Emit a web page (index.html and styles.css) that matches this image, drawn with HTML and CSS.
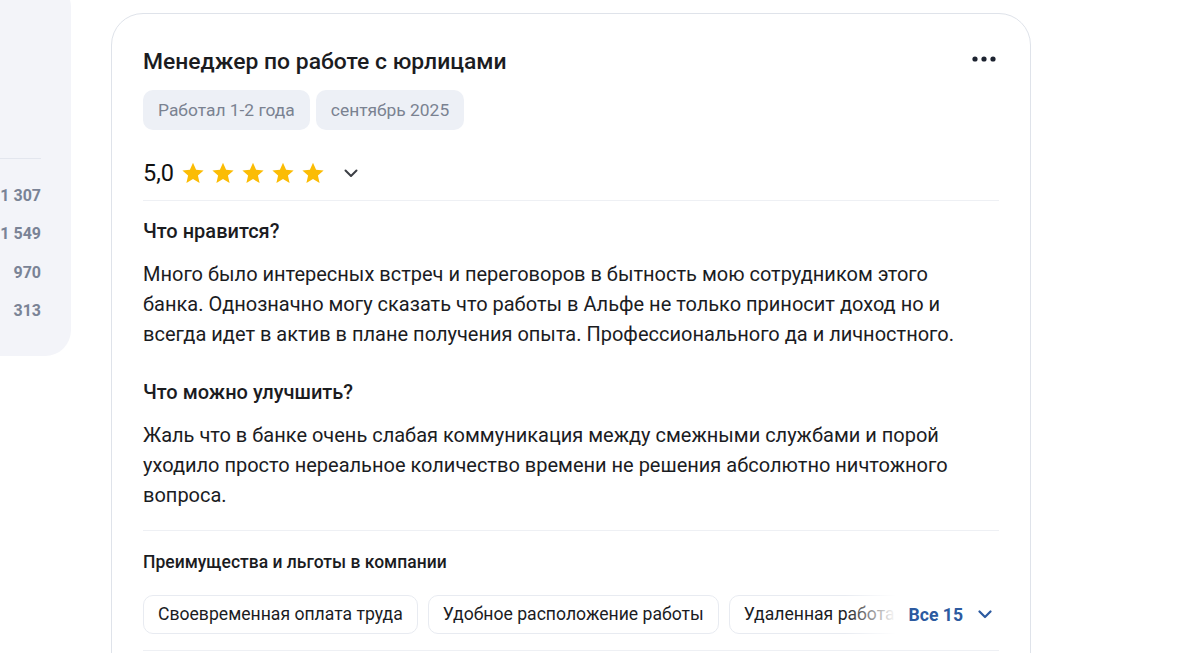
FILE: index.html
```html
<!DOCTYPE html>
<html lang="ru">
<head>
<meta charset="utf-8">
<link rel="stylesheet" href="styles.css">
</head>
<body>
<div class="page">
  <aside class="side">
    <div class="side-top"></div>
    <div class="side-list">
      <div class="side-row">1 307</div>
      <div class="side-row">1 549</div>
      <div class="side-row">970</div>
      <div class="side-row">313</div>
    </div>
  </aside>
  <main class="card">
    <div class="head">
      <h2 class="title">Менеджер по работе с юрлицами</h2>
      <button class="more" aria-label="Ещё"><svg width="24" height="6" viewBox="0 0 24 6"><circle cx="3" cy="3" r="2.6"/><circle cx="12" cy="3" r="2.6"/><circle cx="21" cy="3" r="2.6"/></svg></button>
    </div>
    <div class="tags">
      <span class="tag">Работал 1-2 года</span>
      <span class="tag">сентябрь 2025</span>
    </div>
    <div class="rating">
      <span class="score">5,0</span>
      <span class="stars">
        <svg class="star" viewBox="0 0 24 24"><path d="M12 1.8l3.1 7 7.5.7-5.7 5 1.7 7.5L12 18.1 5.4 22l1.7-7.5-5.7-5 7.5-.7z"/></svg>
        <svg class="star" viewBox="0 0 24 24"><path d="M12 1.8l3.1 7 7.5.7-5.7 5 1.7 7.5L12 18.1 5.4 22l1.7-7.5-5.7-5 7.5-.7z"/></svg>
        <svg class="star" viewBox="0 0 24 24"><path d="M12 1.8l3.1 7 7.5.7-5.7 5 1.7 7.5L12 18.1 5.4 22l1.7-7.5-5.7-5 7.5-.7z"/></svg>
        <svg class="star" viewBox="0 0 24 24"><path d="M12 1.8l3.1 7 7.5.7-5.7 5 1.7 7.5L12 18.1 5.4 22l1.7-7.5-5.7-5 7.5-.7z"/></svg>
        <svg class="star" viewBox="0 0 24 24"><path d="M12 1.8l3.1 7 7.5.7-5.7 5 1.7 7.5L12 18.1 5.4 22l1.7-7.5-5.7-5 7.5-.7z"/></svg>
      </span>
      <svg class="chev" width="14" height="9" viewBox="0 0 14 9"><path d="M1.5 1.5L7 7l5.5-5.5" fill="none" stroke="#3c3f45" stroke-width="2" stroke-linecap="round" stroke-linejoin="round"/></svg>
    </div>
    <div class="section">
      <h3 class="q">Что нравится?</h3>
      <p class="a">Много было интересных встреч и переговоров в бытность мою сотрудником этого банка. Однозначно могу сказать что работы в Альфе не только приносит доход но и всегда идет в актив в плане получения опыта. Профессионального да и личностного.</p>
      <h3 class="q q2">Что можно улучшить?</h3>
      <p class="a">Жаль что в банке очень слабая коммуникация между смежными службами и порой уходило просто нереальное количество времени не решения абсолютно ничтожного вопроса.</p>
    </div>
    <div class="benefits">
      <h4 class="b-title">Преимущества и льготы в компании</h4>
      <div class="chips-row">
        <div class="chips">
          <span class="chip">Своевременная оплата труда</span>
          <span class="chip">Удобное расположение работы</span>
          <span class="chip">Удаленная работа</span>
        </div>
        <div class="all">
          <span>Все 15</span>
          <svg width="14" height="9" viewBox="0 0 14 9"><path d="M1.5 1.5L7 7l5.5-5.5" fill="none" stroke="#2c5aa0" stroke-width="2.2" stroke-linecap="round" stroke-linejoin="round"/></svg>
        </div>
      </div>
    </div>
  </main>
</div>
</body>
</html>
```
FILE: styles.css
```css
* { box-sizing: border-box; }
html, body { margin: 0; padding: 0; background: #fff; }
body {
  font-family: Roboto, "Noto Sans", Arial, sans-serif;
  color: #1b1c1f;
  overflow: hidden;
  height: 653px;
}
.page {
  display: flex;
  align-items: flex-start;
}
.side {
  width: 71px;
  flex: 0 0 71px;
  margin-top: -19px;
  height: 375px;
  background: #f3f4f9;
  border-bottom-right-radius: 26px;
  border-top-right-radius: 26px;
  padding-right: 30px;
}
.side-top {
  height: 178px;
  border-bottom: 1px solid #e3e6ee;
}
.side-list {
  padding-top: 18px;
}
.side-row {
  height: 38.3px;
  line-height: 38px;
  text-align: right;
  font-size: 16px;
  font-weight: 700;
  color: #7a8396;
  white-space: nowrap;
}
.card {
  margin-left: 40px;
  margin-top: 13px;
  width: 920px;
  height: 700px;
  border: 1px solid #dfe3ea;
  border-radius: 32px;
  padding: 28px 31px 0 31px;
}
.head {
  display: flex;
  justify-content: space-between;
  align-items: center;
  height: 38px;
}
.title {
  margin: 0;
  font-size: 22.9px;
  font-weight: 500;
  color: #1b1c1f;
}
.more {
  border: 0;
  background: none;
  padding: 0;
  margin-right: 3px;
  margin-top: -5px;
  display: flex;
  fill: #1d2330;
}
.tags {
  display: flex;
  gap: 6px;
  margin-top: 10px;
}
.tag {
  height: 40px;
  line-height: 40px;
  padding: 0 15px;
  border-radius: 10px;
  background: #edf0f6;
  color: #7a8291;
  font-size: 17.4px;
}
.rating {
  display: flex;
  align-items: center;
  padding: 30px 0 15px;
  height: 71px;
  border-bottom: 1px solid #eef0f4;
}
.score {
  font-size: 23.5px;
  font-weight: 400;
  color: #111;
  margin-right: 7px;
}
.stars {
  display: flex;
  gap: 6px;
}
.star {
  width: 24px;
  height: 24px;
  fill: #fbbc05;
}
.chev {
  margin-left: 19px;
  margin-top: 2px;
}
.section {
  padding-top: 17px;
  border-bottom: 1px solid #eef0f4;
  padding-bottom: 20px;
}
.q {
  margin: 0;
  font-size: 20px;
  font-weight: 500;
  line-height: 26px;
  color: #1b1c1f;
}
.q2 { margin-top: 30px; }
.a {
  margin: 15px 0 0 0;
  max-width: 840px;
  font-size: 20px;
  line-height: 30px;
  color: #1b1c1f;
}
.benefits {
  padding-top: 19px;
  border-bottom: 1px solid #eef0f4;
  padding-bottom: 16px;
}
.b-title {
  margin: 0;
  font-size: 17.5px;
  font-weight: 500;
  line-height: 24px;
  color: #1b1c1f;
}
.chips-row {
  display: flex;
  align-items: center;
  margin-top: 21px;
  position: relative;
}
.chips {
  display: flex;
  gap: 10px;
  flex: 1;
  overflow: hidden;
  white-space: nowrap;
  position: relative;
}
.chips::after {
  content: "";
  position: absolute;
  right: 0;
  top: 0;
  bottom: 0;
  width: 60px;
  background: linear-gradient(to right, rgba(255,255,255,0), #fff 85%);
}
.chip {
  height: 39px;
  line-height: 37px;
  padding: 0 14px;
  border: 1px solid #e8ebf1;
  border-radius: 10px;
  font-size: 17.6px;
  color: #1b1c1f;
  flex: 0 0 auto;
}
.all {
  display: flex;
  align-items: center;
  gap: 15px;
  color: #2c5aa0;
  font-size: 17.6px;
  font-weight: 700;
  padding-left: 4px;
  padding-right: 7px;
  background: #fff;
}
```
